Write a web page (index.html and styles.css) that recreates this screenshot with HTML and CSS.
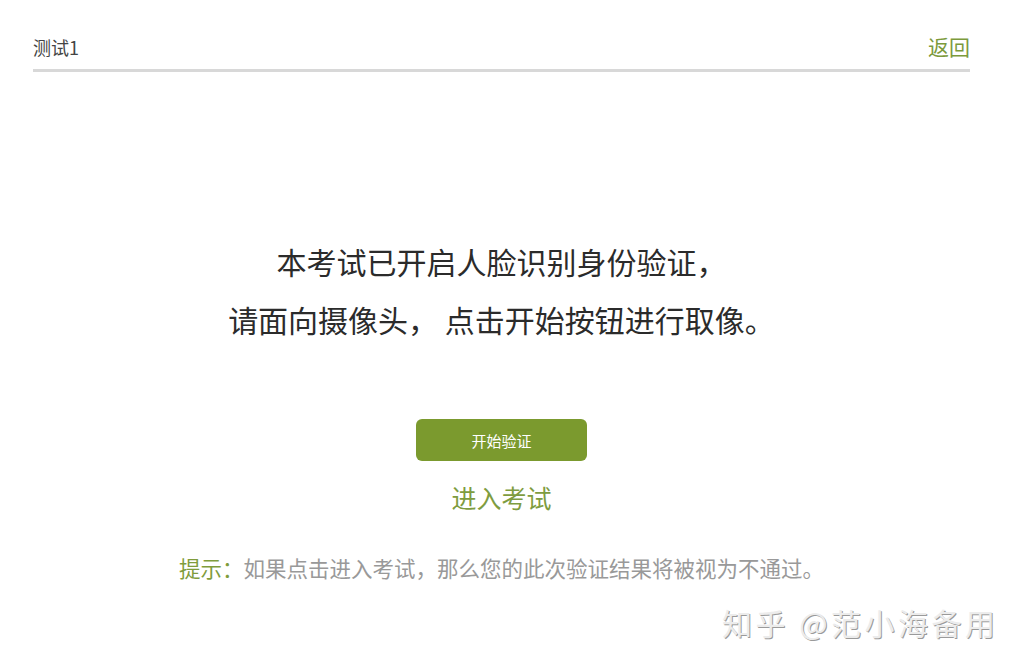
FILE: index.html
```html
<!DOCTYPE html>
<html lang="zh-CN">
<head>
<meta charset="utf-8">
<link rel="stylesheet" href="styles.css">
</head>
<body>
<div class="page">
  <header class="topbar">
    <span class="title">测试1</span>
    <a class="back">返回</a>
  </header>
  <main class="content">
    <p class="notice">本考试已开启人脸识别身份验证，</p>
    <p class="notice">请面向摄像头， 点击开始按钮进行取像。</p>
    <button class="start">开始验证</button>
    <a class="enter">进入考试</a>
    <p class="tip"><span class="tip-label">提示：</span>如果点击进入考试，那么您的此次验证结果将被视为不通过。</p>
  </main>
</div>
<div class="watermark">知乎 @范小海备用</div>
</body>
</html>
```
FILE: styles.css
```css
* { box-sizing: border-box; }
html, body {
  margin: 0;
  padding: 0;
  background: #fff;
  height: 100%;
}
body {
  font-family: "Noto Sans CJK SC", "Noto Sans", sans-serif;
  color: #333;
  position: relative;
  overflow: hidden;
}
.page {
  width: 937px;
  margin-left: 33px;
  display: flex;
  flex-direction: column;
}
.topbar {
  display: flex;
  justify-content: space-between;
  align-items: flex-end;
  height: 72px;
  padding-bottom: 10px;
  border-bottom: 3px solid #d8d8d8;
}
.title {
  font-size: 18px;
  line-height: 24px;
  color: #444;
}
.back {
  font-size: 21px;
  line-height: 26px;
  color: #7c9a3c;
}
.content {
  display: flex;
  flex-direction: column;
  align-items: center;
  padding-top: 160px;
}
.notice {
  margin: 0;
  font-size: 30px;
  line-height: 58px;
  color: #2b2b2b;
}
.start {
  margin-top: 71px;
  width: 171px;
  height: 42px;
  border: none;
  border-radius: 6px;
  background: #7b9a2e;
  color: #fff;
  font-family: inherit;
  font-size: 15px;
  cursor: pointer;
}
.enter {
  margin-top: 18px;
  font-size: 25px;
  line-height: 36px;
  color: #7e9c40;
}
.tip {
  margin: 38px 0 0;
  font-size: 21.5px;
  line-height: 30px;
  color: #999;
}
.tip-label {
  color: #809c3c;
}
.watermark {
  position: absolute;
  left: 722px;
  top: 600px;
  font-size: 30px;
  line-height: 44px;
  letter-spacing: 3.5px;
  color: #ececec;
  text-shadow: 1px 1px 0 #9a9a9a, -1px -1px 0 #fff;
  white-space: nowrap;
}
```
